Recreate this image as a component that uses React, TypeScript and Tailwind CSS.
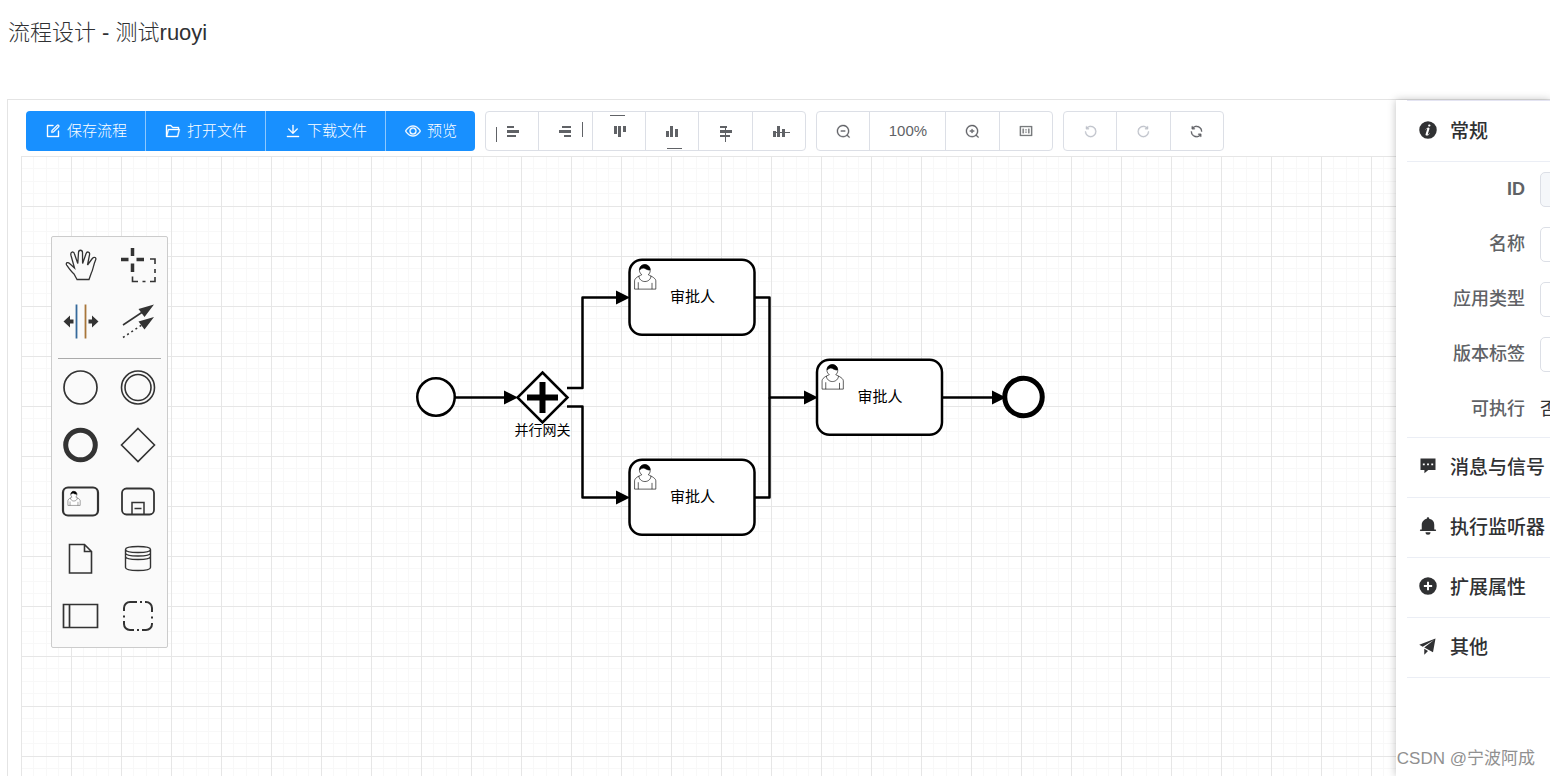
import type { ReactNode } from "react";
import clsx from "clsx";

const ICONS = {
  edit: "M832 512a32 32 0 1 1 64 0v352a32 32 0 0 1-32 32H160a32 32 0 0 1-32-32V160a32 32 0 0 1 32-32h352a32 32 0 0 1 0 64H192v640h640V512z M469.952 554.24 522.752 546.688 847.104 222.4a32 32 0 1 0-45.248-45.248L477.44 501.44l-7.552 52.8zm422.4-422.4a96 96 0 0 1 0 135.808l-331.84 331.84a32 32 0 0 1-18.112 9.088L436.8 623.68a32 32 0 0 1-36.224-36.224l15.104-105.6a32 32 0 0 1 9.024-18.112l331.904-331.84a96 96 0 0 1 135.744 0z",
  folder:
    "M878.08 448H241.92l-96 384h636.16l96-384zM832 384v-64H485.76L357.504 192H128v448l57.92-231.744A32 32 0 0 1 216.96 384H832zm-24.96 512H96a32 32 0 0 1-32-32V160a32 32 0 0 1 32-32h287.872l128.384 128H864a32 32 0 0 1 32 32v96h23.04a32 32 0 0 1 31.04 39.744l-112 448A32 32 0 0 1 807.04 896z",
  download:
    "M128 832h768v64H128zm416-253.696 236.288-236.352 45.248 45.248L508.8 704 192 387.2l45.248-45.248L480 584.704V128h64v450.304z",
  view: "M512 160c320 0 512 352 512 352S832 864 512 864 0 512 0 512s192-352 512-352zm0 64c-225.28 0-384.128 208.064-436.8 288 52.608 79.872 211.456 288 436.8 288 225.28 0 384.128-208.064 436.8-288-52.608-79.872-211.456-288-436.8-288zm0 64a224 224 0 1 1 0 448 224 224 0 0 1 0-448zm0 64a160.192 160.192 0 0 0-160 160c0 88.192 71.744 160 160 160s160-71.808 160-160-71.744-160-160-160z",
  zoomOut:
    "m795.904 750.72 124.992 124.928a32 32 0 0 1-45.248 45.248L750.656 795.904a416 416 0 1 1 45.248-45.248zM480 832a352 352 0 1 0 0-704 352 352 0 0 0 0 704zM352 448h256a32 32 0 0 1 0 64H352a32 32 0 0 1 0-64z",
  zoomIn:
    "m795.904 750.72 124.992 124.928a32 32 0 0 1-45.248 45.248L750.656 795.904a416 416 0 1 1 45.248-45.248zM480 832a352 352 0 1 0 0-704 352 352 0 0 0 0 704zM352 448h96v-96h64v96h96a32 32 0 0 1 0 64h-96v96h-64v-96h-96a32 32 0 0 1 0-64z",
  original:
    "M64 160h896v704H64zm64 64v576h768V224zM272 352h64v320h-64zM688 352h64v320h-64zM480 400h64v64h-64zM480 560h64v64h-64z",
  undo: "M289.088 296.704h92.992a32 32 0 0 1 0 64H232.96a32 32 0 0 1-32-32V179.712a32 32 0 0 1 64 0v50.56a384 384 0 0 1 643.84 282.88 384 384 0 0 1-383.936 384 384 384 0 0 1-384-384h64a320 320 0 1 0 640 0 320 320 0 0 0-555.712-216.448z",
  refresh:
    "M771.776 794.88A384 384 0 0 1 128 512h64a320 320 0 0 0 555.712 216.448H654.72a32 32 0 1 1 0-64h149.056a32 32 0 0 1 32 32v148.928a32 32 0 1 1-64 0v-50.56zM276.288 295.616h92.992a32 32 0 0 1 0 64H220.16a32 32 0 0 1-32-32V178.56a32 32 0 0 1 64 0v50.56A384 384 0 0 1 896.128 512h-64a320 320 0 0 0-555.776-216.384z",
  info: "M512 64a448 448 0 1 1 0 896.064A448 448 0 0 1 512 64zm67.2 275.072c33.28 0 60.288-23.104 60.288-57.344s-27.072-57.344-60.288-57.344c-33.28 0-60.16 23.104-60.16 57.344s26.88 57.344 60.16 57.344zM590.912 699.2c0-6.848 2.368-24.64 1.024-34.752l-52.608 60.544c-10.88 11.456-24.512 19.392-30.912 17.28a12.992 12.992 0 0 1-8.256-14.72l87.68-276.992c7.168-35.136-12.544-67.2-54.336-71.296-44.096 0-108.992 44.736-148.48 101.504 0 6.784-1.28 23.68.064 33.792l52.544-60.608c10.88-11.328 23.552-19.328 29.952-17.152a12.8 12.8 0 0 1 7.808 16.128L388.48 728.576c-10.048 32.256 8.96 63.872 55.04 71.04 67.84 0 107.904-43.648 147.456-100.416z",
  comment:
    "M128 128v592h200v160l200-160h368V128zM248 380h96v96h-96zM464 380h96v96h-96zM680 380h96v96h-96z",
  bell: "M640 832a128 128 0 0 1-256 0h256zm192-64H134.4a38.4 38.4 0 0 1 0-76.8H192V448c0-154.88 110.08-284.16 256.32-313.6a64 64 0 1 1 127.36 0A320.128 320.128 0 0 1 832 448v243.2h57.6a38.4 38.4 0 0 1 0 76.8H832z",
  plus: "M512 64a448 448 0 1 1 0 896 448 448 0 0 1 0-896zm-50 398H300v100h162v162h100V562h162V462H562V300H462z",
  promotion:
    "m64 448 832-320-128 704-446.08-243.328L832 192 242.816 545.472 64 448zm256 512V657.024L512 768 320 960z",
};

type IconName = keyof typeof ICONS;

function Icon({ name, bold, className }: { name: IconName; bold?: boolean; className?: string }) {
  return (
    <svg
      viewBox="0 0 1024 1024"
      fill="currentColor"
      fillRule="evenodd"
      stroke={bold ? "currentColor" : "none"}
      strokeWidth="24"
      className={clsx("shrink-0", className)}
      aria-hidden
    >
      <path d={ICONS[name]} />
    </svg>
  );
}

const FILE_ACTIONS: { icon: IconName; label: string }[] = [
  { icon: "edit", label: "保存流程" },
  { icon: "folder", label: "打开文件" },
  { icon: "download", label: "下载文件" },
  { icon: "view", label: "预览" },
];

// three bars plus the guide line they are aligned to
const ALIGN_ACTIONS = [
  { title: "向左对齐", d: "M21 14h7v2h-7zM21 18h12v3h-12zM21 23h9v2h-9zM10 15h1v15h-1z" },
  { title: "向右对齐", d: "M23 14h9v2h-9zM20 18h12v3h-12zM25 23h7v2h-7zM43 10h1v15h-1z" },
  { title: "向上对齐", d: "M21 14h3v8h-3zM25 14h3v11h-3zM30 14h3v6h-3zM17 3h15v1h-15z" },
  { title: "向下对齐", d: "M20 19h3v6h-3zM24 14h3v11h-3zM29 17h3v8h-3zM21 36h15v1h-15z" },
  { title: "水平居中", d: "M21 14h7v2h-7zM21 18h12v3h-12zM21 23h10v2h-10zM26 15h1v15h-1z" },
  { title: "垂直居中", d: "M20 19h3v6h-3zM24 14h3v11h-3zM29 17h3v8h-3zM22 20h15v1h-15z" },
];

const cell = "flex h-full items-center justify-center border-[#dcdfe6]";

function Group({ className, children }: { className: string; children: ReactNode }) {
  return (
    <div
      className={clsx(
        "flex h-10 shrink-0 overflow-hidden rounded border border-[#dcdfe6] bg-white text-[#606266]",
        className,
      )}
    >
      {children}
    </div>
  );
}

function Toolbar() {
  return (
    <div className="flex gap-[10px] pt-[11px] pb-[5px] pl-[18px]">
      <div className="flex h-10 shrink-0 overflow-hidden rounded bg-[#1890ff] text-[15px] text-white">
        {FILE_ACTIONS.map((a) => (
          <button
            key={a.label}
            className="flex items-center gap-[6px] border-r border-[#8cc8ff] pr-[18px] pl-[19px] font-light whitespace-nowrap last:border-r-0"
          >
            <Icon name={a.icon} bold className="size-4" />
            {a.label}
          </button>
        ))}
      </div>

      <Group className="w-[321px]">
        {ALIGN_ACTIONS.map((a) => (
          <button
            key={a.title}
            aria-label={a.title}
            className={clsx(cell, "min-w-0 flex-1 justify-start border-r last:border-r-0")}
          >
            <svg width="52" height="38" viewBox="0 0 52 38" fill="currentColor" className="shrink-0">
              <path d={a.d} />
            </svg>
          </button>
        ))}
      </Group>

      <Group className="w-[237px]">
        <button aria-label="缩小视图" className={clsx(cell, "flex-1 border-r")}>
          <Icon name="zoomOut" bold className="size-[15px]" />
        </button>
        <button className={clsx(cell, "w-[76px] border-r text-[15px]")}>100%</button>
        <button aria-label="放大视图" className={clsx(cell, "flex-1 border-r")}>
          <Icon name="zoomIn" bold className="size-[15px]" />
        </button>
        <button aria-label="重置视图" className={clsx(cell, "flex-1")}>
          <Icon name="original" bold className="size-[14px]" />
        </button>
      </Group>

      <Group className="w-[161px]">
        <button aria-label="撤销" disabled className={clsx(cell, "flex-1 border-r text-[#c0c4cc]")}>
          <Icon name="undo" bold className="size-[15px]" />
        </button>
        <button aria-label="恢复" disabled className={clsx(cell, "flex-1 border-r text-[#c0c4cc]")}>
          <Icon name="undo" bold className="size-[15px] -scale-x-100" />
        </button>
        <button aria-label="重新绘制" className={clsx(cell, "flex-1")}>
          <Icon name="refresh" bold className="size-[15px]" />
        </button>
      </Group>
    </div>
  );
}

function Person() {
  return (
    <g stroke="#000" strokeWidth="0.5">
      <path
        fill="#fff"
        d="m15,12 c 0.909,-0.845 1.594,-2.049 1.594,-3.385 0,-2.554 -1.805,-4.622 -4.357,-4.622 -2.552,0 -4.288,2.068 -4.288,4.622 0,1.348 0.974,2.562 1.896,3.405 -0.529,0.187 -5.669,2.097 -5.794,4.756 v 6.718 h 17 v -6.718 c 0,-2.298 -5.528,-4.595 -6.051,-4.776zm -8,6 l 0,5.5 m 11,0 l 0,-5"
      />
      <path fill="none" d="m17.162,13.009 c 0,2.447 -2.158,4.431 -4.821,4.431 -2.665,0 -4.822,-1.981 -4.822,-4.431" />
      <path
        fill="#000"
        d="m8.1,8.2 c 0,0 2.251,-2.358 4.274,-1.177 2.024,1.181 4.221,1.537 4.124,0.965 -0.098,-0.57 -0.117,-3.791 -4.191,-4.136 -3.572,0.172 -4.207,2.585 -4.207,4.348z"
      />
    </g>
  );
}

function Task({ x, y }: { x: number; y: number }) {
  return (
    <g transform={`translate(${x} ${y})`}>
      <rect width="125" height="75" rx="12.5" fill="#fff" stroke="#000" strokeWidth="2.5" />
      <g transform="scale(1.25)">
        <Person />
      </g>
      <text x="63" y="42" fontSize="15" textAnchor="middle">
        审批人
      </text>
    </g>
  );
}

// arrow heads are drawn at the end of each flow, tip at (x, y)
function Flow({ d, x, y }: { d: string; x: number; y: number }) {
  return (
    <>
      <path d={d} fill="none" stroke="#000" strokeWidth="2.5" strokeLinejoin="round" />
      <path d={`M${x} ${y}l-14 -7v14z`} />
    </>
  );
}

function Diagram() {
  return (
    <svg className="absolute inset-0 h-full w-full">
      <defs>
        <pattern id="grid" width="50" height="50" patternUnits="userSpaceOnUse">
          <path d="M12.5 0v50M25.5 0v50M37.5 0v50M0 12.5h50M0 25.5h50M0 37.5h50" stroke="#f8f8f8" />
          <path d="M0.5 0v50M0 0.5h50" stroke="#e6e6e6" />
        </pattern>
      </defs>
      <rect width="100%" height="100%" fill="url(#grid)" />

      <Flow d="M434 241.5H485" x={497} y={241.5} />
      <Flow d="M546 232H561.5V141.5H598" x={609} y={141.5} />
      <Flow d="M546 250.5H561.5V341.5H598" x={609} y={341.5} />
      <Flow d="M734 141.5H748.5V241.5H786" x={797} y={241.5} />
      <path d="M734 341.5H748.5V241.5" fill="none" stroke="#000" strokeWidth="2.5" strokeLinejoin="round" />
      <Flow d="M922 241.5H973" x={985} y={241.5} />

      <circle cx="415" cy="241" r="18.75" fill="#fff" stroke="#000" strokeWidth="2.5" />
      <path d="M521.5 216.5l25 25-25 25-25-25z" fill="#fff" stroke="#000" strokeWidth="2.5" />
      <path d="M506 241.5h31M521.5 226v31" stroke="#000" strokeWidth="6" />
      <text x="521.5" y="279" fontSize="14" textAnchor="middle">
        并行网关
      </text>
      <Task x={608.5} y={103.75} />
      <Task x={608.5} y={303.75} />
      <Task x={796} y={203.75} />
      <circle cx="1002.5" cy="241" r="18.75" fill="#fff" stroke="#000" strokeWidth="5" />
    </svg>
  );
}

const TOOLS: { title: string; art: ReactNode }[] = [
  {
    title: "抓手工具",
    art: (
      <path
        strokeWidth="1.3"
        d="M20 38.5 17 33C14 30.5 12 27.5 9.6 24 8.5 21.5 11 20.8 12.6 22.5L17.5 27 14 14.5C13 10.5 16.5 9.8 17.5 13L20.8 22.5 21.5 11.5C21.7 8.5 25.3 8.5 25.5 11.5L25.6 22.5 29 12.8C30 9.8 33 11 32.6 13.5L30.5 24 35.3 17.5C37.5 15 39.5 17 38.6 19 36.5 23.5 36 29 34.3 32L32 38.5z"
      />
    ),
  },
  {
    title: "套索工具",
    art: (
      <>
        <path strokeWidth="3.5" d="M7 18.5h7.5M22.5 18.5H30M18.5 7v8M18.5 22.5v8.5" />
        <path strokeWidth="1.6" d="M18.5 35.5v5H24M28.5 40.5h3M36 40.5h5V36M41 32v-4M41 23v-5h-5" />
      </>
    ),
  },
  {
    title: "空间工具",
    art: (
      <>
        <path strokeWidth="1.8" stroke="#35699b" d="M19.5 7.5v34" />
        <path strokeWidth="1.8" stroke="#a8763a" d="M28.5 7.5v34" />
        <path fill="#333" stroke="none" d="M6.5 24.500l6.500-6v4h3.500v4H13v4zM41.500 24.500l-6.500-6v4h-3.500v4H35v4z" />
      </>
    ),
  },
  {
    title: "连线工具",
    art: (
      <>
        <path strokeWidth="1.6" d="M9 28 30 14" />
        <path strokeWidth="1.6" strokeDasharray="2 3" d="M9 40.5 30 26.5" />
        <path fill="#333" stroke="none" d="M40 7.5 24.5 12l6 8zM40 20 24.5 24.5l6 8z" />
      </>
    ),
  },
];

const SHAPES: { title: string; art: ReactNode }[] = [
  { title: "开始事件", art: <circle cx="23.5" cy="23.5" r="16.5" strokeWidth="1.7" /> },
  {
    title: "中间事件",
    art: (
      <>
        <circle cx="24" cy="23.5" r="16.5" strokeWidth="1.6" />
        <circle cx="24" cy="23.5" r="13" strokeWidth="1.6" />
      </>
    ),
  },
  { title: "结束事件", art: <circle cx="23.5" cy="24" r="14.8" strokeWidth="5" /> },
  { title: "网关", art: <path strokeWidth="1.6" d="M24 7.5 40.5 24 24 40.5 7.5 24z" /> },
  {
    title: "用户任务",
    art: (
      <>
        <rect x="6" y="9.5" width="35" height="28" rx="5" strokeWidth="2.2" />
        <g transform="translate(8 10.5) scale(0.72)">
          <Person />
        </g>
      </>
    ),
  },
  {
    title: "子流程",
    art: (
      <>
        <rect x="8" y="10.5" width="32" height="26" rx="4.5" strokeWidth="1.8" />
        <path strokeWidth="1.5" d="M18 36.5V24.5h12v12M20.5 30.5h7" />
      </>
    ),
  },
  {
    title: "数据对象",
    art: <path strokeWidth="1.6" d="M12.5 9.5h15l7 7v21.5h-22zM27.500 9.500v7h7" />,
  },
  {
    title: "数据存储",
    art: (
      <path
        strokeWidth="1.4"
        d="M11.5 14.5v18c0 4 25 4 25 0v-18M11.500 14.500c0-4 25-4 25 0s-25 4-25 0M11.500 18c0 4 25 4 25 0M11.500 21.500c0 4 25 4 25 0"
      />
    ),
  },
  { title: "参与者", art: <path strokeWidth="1.7" d="M6.5 12.5h34v23h-34zM12.500 12.500v23" /> },
  {
    title: "分组",
    art: (
      <path
        strokeWidth="2"
        d="M10 19v-3a6 6 0 0 1 6-6h7M31 10h1a6 6 0 0 1 6 6v4M38 31v1a6 6 0 0 1-6 6h-4M20 38h-4a6 6 0 0 1-6-6v-3M26 10h2M23 38h2M10 23.500v2M38 24.500v2"
      />
    ),
  },
];

function Palette() {
  const entry = (t: { title: string; art: ReactNode }) => (
    <button key={t.title} aria-label={t.title} className="flex items-center justify-center">
      <svg width="48" height="48" viewBox="0 0 48 48" fill="none" stroke="#333">
        {t.art}
      </svg>
    </button>
  );
  return (
    <div className="absolute top-20 left-[30px] w-[117px] rounded-xs border border-[#ccc] bg-[#fafafa] pb-[2px]">
      <div className="grid h-[112px] grid-cols-2 grid-rows-2">{TOOLS.map(entry)}</div>
      <hr className="mx-[6px] mt-[9px] border-[#aaa]" />
      <div className="grid h-[286px] grid-cols-2 grid-rows-5">{SHAPES.map(entry)}</div>
    </div>
  );
}

function SectionHeader({ icon, title }: { icon: IconName; title: string }) {
  return (
    <button className="flex h-[60px] w-full items-center gap-3 border-b border-[#ebeef5] pt-[2px] pl-[11px] text-[19px] font-medium whitespace-nowrap text-[#303133]">
      <Icon name={icon} className="mb-[6px] size-5" />
      {title}
    </button>
  );
}

const FIELDS = [
  { id: "process-id", label: "ID", disabled: true },
  { id: "process-name", label: "名称" },
  { id: "process-app", label: "应用类型" },
  { id: "process-version", label: "版本标签" },
];

function PropertiesPanel() {
  return (
    <aside className="relative w-[154px] shrink-0 bg-white pl-[11px] shadow-[0_0_8px_rgba(0,0,0,0.25)]">
      <div className="w-[440px] border-t border-[#e4e4f2] pt-px">
        <SectionHeader icon="info" title="常规" />
        <div className="border-b border-[#ebeef5] text-[18px] text-[#606266]">
          {FIELDS.map((f) => (
            <div key={f.id} className="flex h-[55px] items-center gap-[15px]">
              <label htmlFor={f.id} className={clsx("w-[118px] text-right", f.disabled ? "font-bold" : "font-medium")}>
                {f.label}
              </label>
              <input
                id={f.id}
                disabled={f.disabled}
                className="h-[35px] flex-1 rounded-[5px] border border-[#dcdfe6] px-3 disabled:bg-[#f5f7fa]"
              />
            </div>
          ))}
          <div className="flex h-[55px] items-center gap-[15px]">
            <span className="w-[118px] text-right font-medium">可执行</span>
            <span className="text-[#303133]">否</span>
          </div>
        </div>
        <SectionHeader icon="comment" title="消息与信号" />
        <SectionHeader icon="bell" title="执行监听器" />
        <SectionHeader icon="plus" title="扩展属性" />
        <SectionHeader icon="promotion" title="其他" />
      </div>
    </aside>
  );
}

export default function App() {
  return (
    <div className="relative flex h-screen flex-col overflow-hidden bg-white font-['Liberation_Sans','Noto_Sans_CJK_SC',sans-serif]">
      <h1 className="h-[99px] shrink-0 pt-4 pl-2 text-[22px] leading-[34px] font-light text-[#303133]">
        流程设计 - 测试ruoyi
      </h1>
      <main className="ml-[7px] flex min-h-0 flex-1 border-t border-l border-[#e4e4e4]">
        <section className="flex min-w-0 flex-1 flex-col">
          <Toolbar />
          <div className="relative ml-[13px] flex-1">
            <Diagram />
            <Palette />
          </div>
        </section>
        <PropertiesPanel />
      </main>
      <span className="absolute right-[15px] bottom-1 text-[17px] leading-[26px] whitespace-nowrap text-[#909090]">
        CSDN @宁波阿成
      </span>
    </div>
  );
}
